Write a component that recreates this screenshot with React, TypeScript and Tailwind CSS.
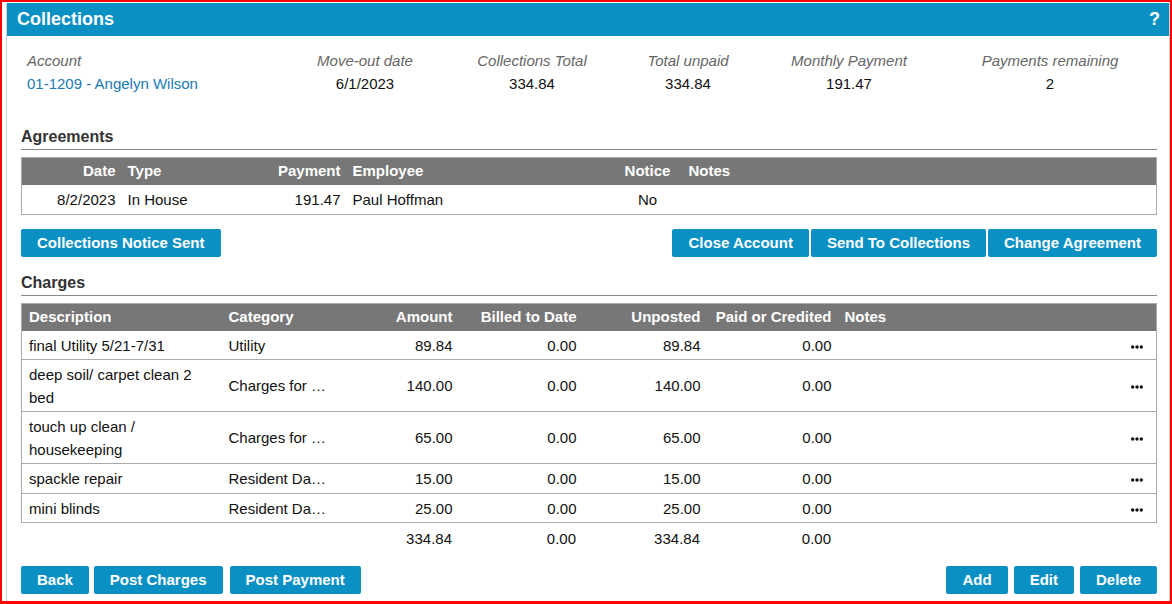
import React from "react"

const btn =
  "h-[28px] px-[16px] bg-[#0b90c4] text-white font-bold text-[15px] leading-[28px] rounded-[2px] whitespace-nowrap"

const info = [
  { label: "Move-out date", value: "6/1/2023" },
  { label: "Collections Total", value: "334.84" },
  { label: "Total unpaid", value: "334.84" },
  { label: "Monthly Payment", value: "191.47" },
  { label: "Payments remaining", value: "2" },
]

const charges = [
  { desc: "final Utility 5/21-7/31", cat: "Utility", amount: "89.84", billed: "0.00", unposted: "89.84", paid: "0.00" },
  { desc: "deep soil/ carpet clean 2 bed", cat: "Charges for Cleaning", amount: "140.00", billed: "0.00", unposted: "140.00", paid: "0.00" },
  { desc: "touch up clean / housekeeping", cat: "Charges for Cleaning", amount: "65.00", billed: "0.00", unposted: "65.00", paid: "0.00" },
  { desc: "spackle repair", cat: "Resident Damages", amount: "15.00", billed: "0.00", unposted: "15.00", paid: "0.00" },
  { desc: "mini blinds", cat: "Resident Damages", amount: "25.00", billed: "0.00", unposted: "25.00", paid: "0.00" },
]

function Dots() {
  return (
    <svg width="12" height="4" viewBox="0 0 12 4" className="inline-block">
      <circle cx="1.7" cy="2" r="1.7" fill="#111" />
      <circle cx="6" cy="2" r="1.7" fill="#111" />
      <circle cx="10.3" cy="2" r="1.7" fill="#111" />
    </svg>
  )
}

function SectionTitle({ children }: { children: React.ReactNode }) {
  return (
    <div className="text-[16px] leading-[21px] font-bold text-[#333] pb-[2px] border-b border-[#888]">
      {children}
    </div>
  )
}

function ChargeCols() {
  return (
    <colgroup>
      <col className="w-[200px]" />
      <col className="w-[112px]" />
      <col className="w-[125px]" />
      <col className="w-[124px]" />
      <col className="w-[124px]" />
      <col className="w-[131px]" />
      <col />
      <col className="w-[40px]" />
    </colgroup>
  )
}

export default function App() {
  const th = "pt-[2px] pb-[3px] px-[6px] font-bold text-white text-[15px] leading-[22px]"
  const td = "pt-[4px] pb-[2px] px-[6px] text-[15px] leading-[22.5px] align-middle"

  return (
    <div className="w-[1172px] h-[604px] overflow-hidden bg-white border-2 border-b-[3px] border-[#ff0000] font-['Liberation_Sans',Arial,sans-serif] text-[#111]">
      <div className="ml-[4px] mt-[1px] h-full border-x border-[#d0d0d0]">
        {/* Header */}
        <div className="h-[33px] bg-[#0b90c4] flex items-center justify-between pl-[10px] pr-[9px]">
          <h1 className="text-white font-bold text-[18px]">Collections</h1>
          <span className="text-white font-bold text-[18px]">?</span>
        </div>

        <div className="pl-[14px] pr-[12px]">
          {/* Account info */}
          <div className="grid grid-cols-[270px_148px_186px_126px_196px_206px] mt-[14px] text-[15px] leading-[22px]">
            <div className="px-[6px]">
              <div className="italic text-[#666]">Account</div>
              <div className="mt-[1px] text-[#1a7bb5]">01-1209 - Angelyn Wilson</div>
            </div>
            {info.map((i) => (
              <div key={i.label} className="text-center">
                <div className="italic text-[#666]">{i.label}</div>
                <div className="mt-[1px]">{i.value}</div>
              </div>
            ))}
          </div>

          {/* Agreements */}
          <div className="mt-[31px]">
            <SectionTitle>Agreements</SectionTitle>
          </div>
          <table className="w-full table-fixed border-collapse border border-[#aaa] mt-[7px]">
            <colgroup>
              <col className="w-[100px]" />
              <col className="w-[125px]" />
              <col className="w-[100px]" />
              <col className="w-[266px]" />
              <col className="w-[70px]" />
              <col />
            </colgroup>
            <thead>
              <tr className="bg-[#777]">
                <th className={`${th} text-right`}>Date</th>
                <th className={`${th} text-left`}>Type</th>
                <th className={`${th} text-right`}>Payment</th>
                <th className={`${th} text-left`}>Employee</th>
                <th className={`${th} text-center`}>Notice</th>
                <th className={`${th} text-left`}>Notes</th>
              </tr>
            </thead>
            <tbody>
              <tr>
                <td className={`${td} text-right`}>8/2/2023</td>
                <td className={td}>In House</td>
                <td className={`${td} text-right`}>191.47</td>
                <td className={td}>Paul Hoffman</td>
                <td className={`${td} text-center`}>No</td>
                <td className={td}></td>
              </tr>
            </tbody>
          </table>

          <div className="flex justify-between mt-[14px]">
            <button className={btn}>Collections Notice Sent</button>
            <div className="flex gap-[2px]">
              <button className={btn}>Close Account</button>
              <button className={btn}>Send To Collections</button>
              <button className={btn}>Change Agreement</button>
            </div>
          </div>

          {/* Charges */}
          <div className="mt-[15px]">
            <SectionTitle>Charges</SectionTitle>
          </div>
          <table className="w-full table-fixed border-collapse border border-[#aaa] mt-[7px]">
            <ChargeCols />
            <thead>
              <tr className="bg-[#777]">
                <th className={`${th} text-left pl-[7px]`}>Description</th>
                <th className={`${th} text-left pl-[7px]`}>Category</th>
                <th className={`${th} text-right`}>Amount</th>
                <th className={`${th} text-right`}>Billed to Date</th>
                <th className={`${th} text-right`}>Unposted</th>
                <th className={`${th} text-right`}>Paid or Credited</th>
                <th className={`${th} text-left pl-[7px]`}>Notes</th>
                <th className={th}></th>
              </tr>
            </thead>
            <tbody>
              {charges.map((c) => (
                <tr key={c.desc} className="border-b border-[#aaa]">
                  <td className={`${td} pl-[7px] pr-[7px]`}>{c.desc}</td>
                  <td className={`${td} pl-[7px] truncate`}>{c.cat}</td>
                  <td className={`${td} text-right`}>{c.amount}</td>
                  <td className={`${td} text-right`}>{c.billed}</td>
                  <td className={`${td} text-right`}>{c.unposted}</td>
                  <td className={`${td} text-right`}>{c.paid}</td>
                  <td className={td}></td>
                  <td className={`${td} text-right pr-[13px]`}>
                    <Dots />
                  </td>
                </tr>
              ))}
            </tbody>
          </table>
          <table className="w-full table-fixed border-collapse">
            <ChargeCols />
            <tbody>
              <tr>
                <td className={`${td} pt-[5px]`}></td>
                <td className={`${td} pt-[5px]`}></td>
                <td className={`${td} pt-[5px] text-right`}>334.84</td>
                <td className={`${td} pt-[5px] text-right`}>0.00</td>
                <td className={`${td} pt-[5px] text-right`}>334.84</td>
                <td className={`${td} pt-[5px] text-right`}>0.00</td>
                <td className={`${td} pt-[5px]`}></td>
                <td className={`${td} pt-[5px]`}></td>
              </tr>
            </tbody>
          </table>

          <div className="flex justify-between mt-[13px]">
            <div className="flex">
              <button className={`${btn} mr-[5px]`}>Back</button>
              <button className={`${btn} mr-[7px]`}>Post Charges</button>
              <button className={btn}>Post Payment</button>
            </div>
            <div className="flex gap-[6px]">
              <button className={btn}>Add</button>
              <button className={btn}>Edit</button>
              <button className={btn}>Delete</button>
            </div>
          </div>
        </div>
      </div>
    </div>
  )
}
